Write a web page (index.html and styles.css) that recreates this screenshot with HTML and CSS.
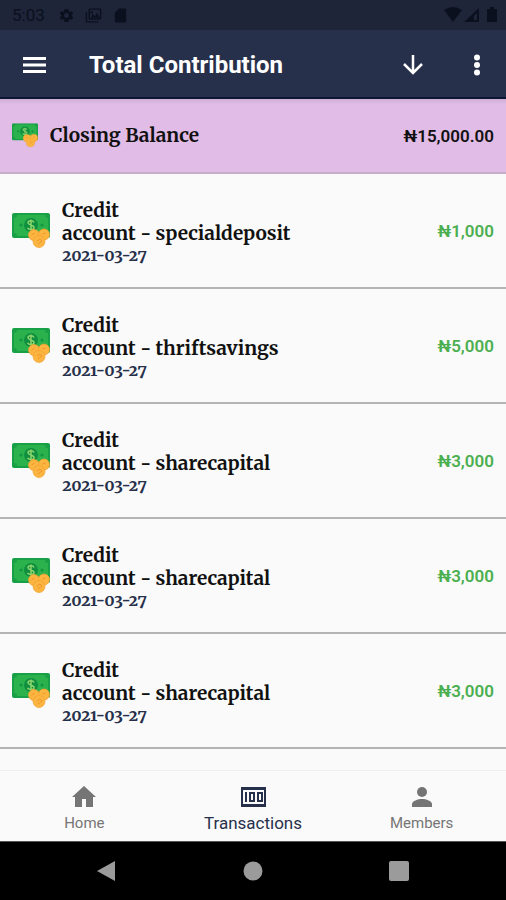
FILE: index.html
```html
<!DOCTYPE html>
<html lang="en">
<head>
<meta charset="utf-8">
<meta name="viewport" content="width=device-width, initial-scale=1">
<title>Total Contribution</title>
<link rel="stylesheet" href="styles.css">
</head>
<body>
<svg class="symbols" aria-hidden="true">
  <symbol id="money" viewBox="0 0 38 36">
    <rect x="0" y="0" width="38" height="25" rx="2" fill="#17a045"/>
    <path d="M5 2h28a3 3 0 0 0 3 3v15a3 3 0 0 0-3 3H5a3 3 0 0 0-3-3V5a3 3 0 0 0 3-3z" fill="#2bb24c"/>
    <circle cx="19" cy="12" r="7" fill="#0f8f3f"/>
    <circle cx="9" cy="12" r="1.500" fill="#149441"/>
    <circle cx="30" cy="12" r="1.500" fill="#149441"/>
    <path d="M22 9.500C21 7 16 7.200 16 9.700s6 2 6 4.700-5 3-6.500.5M19 6.500v11" fill="none" stroke="#8ed66c" stroke-width="1.500"/>
    <g fill="#fbb540" stroke="#f5a030" stroke-width=".7">
      <circle cx="22" cy="22" r="5.500"/>
      <circle cx="32" cy="21.500" r="5.500"/>
      <circle cx="27" cy="28.500" r="6"/>
    </g>
    <path d="M19.500 22l3-2M30.500 21l3-1M25 28l3-2 2 2-4 3" fill="none" stroke="#f2942b"/>
  </symbol>
</svg>

<div class="status">
  <span class="time">5:03</span>
  <svg class="status-icon" viewBox="0 0 24 24"><path d="M19.400 13a7.500 7.500 0 0 0 0-2l2.100-1.600-2-3.500-2.500 1a7 7 0 0 0-1.700-1L15 3h-6l-.4 2.900a7 7 0 0 0-1.700 1l-2.500-1-2 3.500L4.600 11a7.500 7.500 0 0 0 0 2l-2.100 1.600 2 3.500 2.500-1a7 7 0 0 0 1.700 1L9 21h6l.4-2.900a7 7 0 0 0 1.700-1l2.500 1 2-3.500zM12 15.500a3.500 3.500 0 1 1 0-7 3.500 3.500 0 0 1 0 7z"/></svg>
  <svg class="status-icon cast" viewBox="0 0 24 24"><path fill-rule="evenodd" d="M7 2h14q2 0 2 2v12q0 2-2 2H7q-2 0-2-2V4q0-2 2-2zm0 2v12h14V4zM8 15l3-5 3 3 3-5 4 7zM8 6h3v3H8zM1 7h2v13h16v2H3q-2 0-2-2z"/></svg>
  <svg class="status-icon" viewBox="0 0 24 24"><path d="M10 2h8q2 0 2 2v16q0 2-2 2H6q-2 0-2-2V8z"/></svg>
  <span class="fill"></span>
  <svg class="signals" viewBox="0 0 54 18"><path fill-rule="evenodd" d="M0 4q9-6 18 0L9 16zM20 16L35 2v14zM33 7l-3 3v4h3zM43 3h3V1h4v2h3v13H43z"/></svg>
</div>

<header class="appbar">
  <button class="icon-button" aria-label="Open menu"><svg class="icon" viewBox="0 0 28 28"><path d="M3 6h23v3H3zM3 12.500h23v3H3zM3 19h23v3H3z"/></svg></button>
  <h1>Total Contribution</h1>
  <button class="icon-button" aria-label="Download"><svg class="icon" viewBox="0 0 28 28"><path d="M14 4v18M5 13l9 9 9-9" class="stroke"/></svg></button>
  <button class="icon-button more" aria-label="More options"><svg class="icon" viewBox="0 0 28 28"><circle cx="14" cy="6.500" r="3"/><circle cx="14" cy="14" r="3"/><circle cx="14" cy="21.500" r="3"/></svg></button>
</header>

<main>
  <section class="balance">
    <svg class="money-small" viewBox="0 0 38 36"><use href="#money"/></svg>
    <h2>Closing Balance</h2>
    <strong class="amount">₦15,000.00</strong>
  </section>
  <ul class="list">
    <li><svg class="money" viewBox="0 0 38 36"><use href="#money"/></svg><div class="details"><p>Credit<br>account - specialdeposit</p><time>2021-03-27</time></div><span class="amount">₦1,000</span></li>
    <li><svg class="money" viewBox="0 0 38 36"><use href="#money"/></svg><div class="details"><p>Credit<br>account - thriftsavings</p><time>2021-03-27</time></div><span class="amount">₦5,000</span></li>
    <li><svg class="money" viewBox="0 0 38 36"><use href="#money"/></svg><div class="details"><p>Credit<br>account - sharecapital</p><time>2021-03-27</time></div><span class="amount">₦3,000</span></li>
    <li><svg class="money" viewBox="0 0 38 36"><use href="#money"/></svg><div class="details"><p>Credit<br>account - sharecapital</p><time>2021-03-27</time></div><span class="amount">₦3,000</span></li>
    <li><svg class="money" viewBox="0 0 38 36"><use href="#money"/></svg><div class="details"><p>Credit<br>account - sharecapital</p><time>2021-03-27</time></div><span class="amount">₦3,000</span></li>
  </ul>
</main>

<nav class="tabs">
  <a href="#home"><svg class="icon" viewBox="0 0 28 28"><path d="M14 3L2 14h3v10h7v-8h4v8h7V14h3z"/></svg>Home</a>
  <a href="#transactions" class="active" aria-current="page"><svg class="icon" viewBox="0 0 28 28"><path fill-rule="evenodd" d="M2 4h25v20H2zM4 7v14h21V7zM6 9h2v10H6zM10 9h6v10h-6zM12 11v6h2v-6zM18 9h6v10h-6zM20 11v6h2v-6z"/></svg>Transactions</a>
  <a href="#members"><svg class="icon" viewBox="0 0 28 28"><circle cx="14" cy="9" r="5"/><path d="M4 24v-3c0-3 6-5 10-5s10 2 10 5v3z"/></svg>Members</a>
</nav>

<div class="system">
  <button aria-label="Back"><svg viewBox="0 0 20 22"><path d="M0 11L18 1v20z"/></svg></button>
  <button aria-label="Home screen"><svg viewBox="0 0 20 22"><circle cx="10" cy="11" r="9.500"/></svg></button>
  <button aria-label="Recent apps"><svg viewBox="0 0 20 22"><rect y="1" width="20" height="20" rx="2"/></svg></button>
</div>
</body>
</html>
```
FILE: styles.css
```css
* {
  box-sizing: border-box;
}

body {
  margin: 0;
  height: 100vh;
  display: flex;
  flex-direction: column;
  background: #fafafa;
  font-family: Roboto, "Liberation Sans", sans-serif;
  color: #111;
}

button {
  padding: 0;
  border: 0;
  background: none;
}

.symbols {
  display: none;
}

.status {
  display: flex;
  flex: none;
  align-items: center;
  gap: 9px;
  height: 30px;
  padding: 0 8px 0 12px;
  background: #1e2538;
  color: #0b101e;
  fill: #0b101e;
}

.time {
  margin-right: 4px;
  font-size: 17px;
}

.status-icon {
  width: 17px;
  height: 17px;
}

.cast {
  width: 19px;
}

.fill {
  flex: 1;
}

.signals {
  width: 54px;
  height: 18px;
}

.appbar {
  display: flex;
  flex: none;
  align-items: center;
  height: 69px;
  padding: 3px 15px 0 20px;
  background: #27304b;
  border-bottom: 2px solid #0c1735;
  color: #fff;
}

.appbar h1 {
  flex: 1;
  margin: 0 0 0 41px;
  font-size: 24px;
  line-height: 28px;
  font-weight: 700;
}

.icon-button {
  display: flex;
  color: #fff;
}

.more {
  margin-left: 36px;
}

.icon {
  width: 28px;
  height: 28px;
  fill: currentColor;
}

.stroke {
  fill: none;
  stroke: currentColor;
  stroke-width: 2.500;
}

main {
  flex: 1;
  min-height: 0;
  overflow: hidden;
}

.balance,
.list li {
  display: flex;
  align-items: center;
  padding: 0 12px;
}

.balance {
  height: 75px;
  background: linear-gradient(#cdaed2, #e1bce6 5px);
  border-bottom: 2px solid #c5afc9;
}

.balance h2,
.details p {
  margin: 0;
  font-family: Merriweather, "DejaVu Serif", serif;
  font-size: 19px;
  line-height: 23px;
  font-weight: 700;
}

.balance h2 {
  flex: 1;
}

.money-small {
  width: 26px;
  height: 25px;
  margin-right: 12px;
}

.money {
  width: 38px;
  height: 36px;
  margin-right: 12px;
}

.list {
  margin: 0;
  padding: 0;
  list-style: none;
}

.list li {
  height: 115px;
  border-bottom: 2px solid #b4b4b4;
}

.details {
  flex: 1;
  padding-top: 3px;
}

.details time {
  display: block;
  font-family: Merriweather, "DejaVu Serif", serif;
  font-size: 16px;
  font-variant-numeric: oldstyle-nums;
  line-height: 20px;
  font-weight: 700;
  color: #27304b;
}

.amount {
  font-size: 17px;
  font-weight: 600;
}

.list .amount {
  color: #4caf50;
}

.tabs {
  display: grid;
  flex: none;
  grid-template-columns: repeat(3, 1fr);
  height: 71px;
  padding-top: 12px;
  border-top: 1px solid #eee;
}

.tabs a {
  display: flex;
  flex-direction: column;
  align-items: center;
  color: #757575;
  font-size: 15px;
  line-height: 24px;
  text-decoration: none;
}

.tabs .active {
  color: #27304b;
  font-size: 17px;
}

.system {
  display: flex;
  flex: none;
  align-items: center;
  justify-content: center;
  gap: 126px;
  height: 59px;
  background: #000;
  border-top: 1px solid #555;
}

.system svg {
  display: block;
  width: 20px;
  height: 22px;
  fill: #9b9b9b;
}
```
